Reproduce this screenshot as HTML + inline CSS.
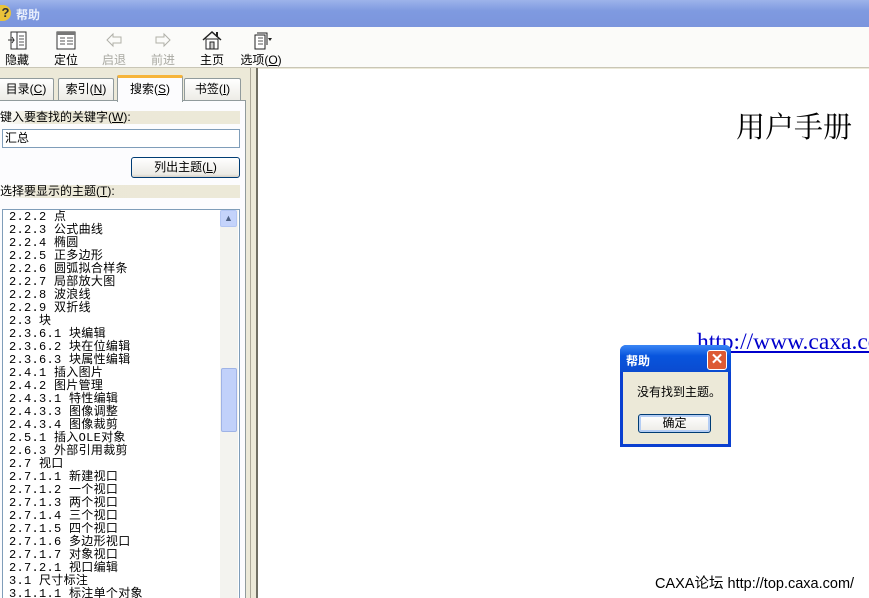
<!DOCTYPE html>
<html><head><meta charset="utf-8"><style>
*{margin:0;padding:0;box-sizing:border-box}
html,body{width:869px;height:598px;overflow:hidden}
body{background:#ece9d8;font-family:"Liberation Sans","Noto Sans CJK SC","WenQuanYi Zen Hei",sans-serif;font-size:12px;color:#000;position:relative}
.abs{position:absolute}
#title{left:0;top:0;width:869px;height:27px;background:linear-gradient(#9db3ea,#7f9ae0 40%,#7b95dd);color:#e8eefc;font-weight:bold;font-size:12px}
#tb{left:0;top:27px;width:869px;height:41px;background:#fbfbf9;border-bottom:1px solid #c9c6b6}
.tbi{position:absolute;top:3px;text-align:center;font-size:12px;width:44px}
.tbi svg{display:block;margin:0 auto 1px}
.dis{color:#a9a9a2}
.tab{position:absolute;top:78px;height:23px;border:1px solid #919b9c;border-bottom:none;background:linear-gradient(#fff,#ecebe5);text-align:center;line-height:21px;border-radius:2px 2px 0 0}
.lbl{position:absolute;left:0;width:240px;height:13px;background:linear-gradient(90deg,#fff,#ebe8d7 15%,#ece9d8);line-height:13px;font-size:12px}
#list{left:2px;top:209px;width:238px;height:389px;border:1px solid #7f9db9;border-bottom:none;background:#fff;overflow:hidden}
#list div{font-family:"Liberation Mono","Noto Sans CJK SC",monospace;font-size:12px;line-height:13px;height:13px;padding-left:6px;white-space:nowrap;letter-spacing:0.3px}
</style></head><body>
<div id="title" class="abs">
 <div class="abs" style="left:0;top:5px;width:11px;height:16px;background:#e8c23a;border-radius:0 8px 8px 0;color:#333;font-size:13px;line-height:16px;text-align:center">?</div>
 <div class="abs" style="left:16px;top:6px">帮助</div>
</div>
<div id="tb" class="abs">
 <div class="tbi" style="left:-5px"><svg width="22" height="20"><rect x="5" y="2" width="15" height="17" fill="#fff" stroke="#333"/><line x1="11" y1="2" x2="11" y2="19" stroke="#333"/><path d="M13 6h5M13 9h5M13 12h5M13 15h5" stroke="#555"/><path d="M2 10h6l-2-3M8 10l-2 3" stroke="#333" fill="none"/></svg>隐藏</div>
 <div class="tbi" style="left:44px"><svg width="22" height="20"><rect x="2" y="2" width="18" height="17" fill="#fff" stroke="#333"/><rect x="2" y="2" width="18" height="3" fill="#777"/><path d="M5 8h5M5 11h5M5 14h5M12 8h6M12 11h6M12 14h6" stroke="#555"/></svg>定位</div>
 <div class="tbi dis" style="left:92px"><svg width="22" height="20"><path d="M4 10l6-6v3h8v6h-8v3z" fill="none" stroke="#b0b0a8"/></svg>启退</div>
 <div class="tbi dis" style="left:141px"><svg width="22" height="20"><path d="M18 10l-6-6v3H4v6h8v3z" fill="none" stroke="#b0b0a8"/></svg>前进</div>
 <div class="tbi" style="left:190px"><svg width="22" height="20"><path d="M2 10L11 2l9 8" fill="none" stroke="#222" stroke-width="1.5"/><rect x="5" y="9" width="12" height="10" fill="#fff" stroke="#222"/><rect x="9" y="12" width="4" height="7" fill="#ccc" stroke="#222"/><rect x="15" y="2" width="2" height="5" fill="#222"/></svg>主页</div>
 <div class="tbi" style="left:238px;width:46px"><svg width="22" height="20"><rect x="5" y="5" width="10" height="14" fill="#fff" stroke="#222"/><path d="M7 3h10v12" fill="none" stroke="#222"/><path d="M8 8h5M8 11h5M8 14h5" stroke="#555"/><path d="M18 8h4l-2 3z" fill="#222"/></svg>选项(<u>O</u>)</div>
</div>
<div class="tab" style="left:-2px;width:56px">目录(<u>C</u>)</div>
<div class="tab" style="left:58px;width:56px">索引(<u>N</u>)</div>
<div class="tab" style="left:184px;width:57px">书签(<u>I</u>)</div>
<div class="tab" style="left:117px;top:75px;height:27px;width:66px;background:#fcfcfe;border-top:3px solid #f6b43a;line-height:22px;z-index:2">搜索(<u>S</u>)</div>
<div class="abs" style="left:0;top:100px;width:246px;height:498px;background:#fcfcfe;border-right:1px solid #919b9c;border-top:1px solid #919b9c"></div>
<div class="lbl" style="top:111px">键入要查找的关键字(<u>W</u>):</div>
<div class="abs" style="left:2px;top:129px;width:238px;height:19px;border:1px solid #7f9db9;background:#fff;padding-left:2px;line-height:17px">汇总</div>
<div class="abs" style="left:131px;top:157px;width:109px;height:21px;border:1px solid #003c74;border-radius:3px;background:linear-gradient(#fff,#ecebe6 85%,#d6d0c5);text-align:center;line-height:19px">列出主题(<u>L</u>)</div>
<div class="lbl" style="top:185px">选择要显示的主题(<u>T</u>):</div>
<div id="list" class="abs">
<div style="margin-top:1px">2.2.2 点</div><div>2.2.3 公式曲线</div><div>2.2.4 椭圆</div><div>2.2.5 正多边形</div><div>2.2.6 圆弧拟合样条</div><div>2.2.7 局部放大图</div><div>2.2.8 波浪线</div><div>2.2.9 双折线</div><div>2.3 块</div><div>2.3.6.1 块编辑</div><div>2.3.6.2 块在位编辑</div><div>2.3.6.3 块属性编辑</div><div>2.4.1 插入图片</div><div>2.4.2 图片管理</div><div>2.4.3.1 特性编辑</div><div>2.4.3.3 图像调整</div><div>2.4.3.4 图像裁剪</div><div>2.5.1 插入OLE对象</div><div>2.6.3 外部引用裁剪</div><div>2.7 视口</div><div>2.7.1.1 新建视口</div><div>2.7.1.2 一个视口</div><div>2.7.1.3 两个视口</div><div>2.7.1.4 三个视口</div><div>2.7.1.5 四个视口</div><div>2.7.1.6 多边形视口</div><div>2.7.1.7 对象视口</div><div>2.7.2.1 视口编辑</div><div>3.1 尺寸标注</div><div>3.1.1.1 标注单个对象</div>
</div>
<div class="abs" style="left:220px;top:210px;width:18px;height:388px;background:#f3f3ef"></div>
<div class="abs" style="left:220px;top:210px;width:17px;height:17px;background:#c4d3fb;border:1px solid #b3c6f4;border-radius:2px;color:#4d6185;font-size:9px;text-align:center;line-height:15px">▲</div>
<div class="abs" style="left:221px;top:368px;width:16px;height:64px;background:#c1d1fa;border:1px solid #9fb3e6;border-radius:2px"></div>
<div class="abs" style="left:250px;top:68px;width:1px;height:530px;background:#aca899"></div>
<div class="abs" style="left:256px;top:68px;width:2px;height:530px;background:#716f64"></div>
<div class="abs" style="left:258px;top:69px;width:611px;height:529px;background:#fff;overflow:hidden">
 <div class="abs" style="left:478px;top:36px;font-family:'Liberation Serif','Noto Serif CJK SC',serif;font-size:29px;white-space:nowrap">用户手册</div>
 <div class="abs" style="left:439px;top:260px;font-family:'Liberation Serif',serif;font-size:23.5px;color:#0000cc;text-decoration:underline;white-space:nowrap">http://www.caxa.com</div>
 <div class="abs" style="left:397px;top:503px;font-size:14.5px;white-space:nowrap">CAXA论坛 http://top.caxa.com/</div>
</div>
<div class="abs" style="left:620px;top:345px;width:111px;height:102px;background:#0a3fd0;border-radius:6px 6px 0 0"></div>
<div class="abs" style="left:620px;top:345px;width:111px;height:27px;background:linear-gradient(#3b87f5,#0855dd 40%,#0a4bd0);border-radius:6px 6px 0 0;color:#fff;font-weight:bold;padding:7px 0 0 6px">帮助</div>
<div class="abs" style="left:707px;top:350px;width:20px;height:20px;background:#dd5a33;border:1px solid #fff;border-radius:3px;color:#fff;font-size:15px;text-align:center;line-height:18px;font-weight:bold">✕</div>
<div class="abs" style="left:623px;top:372px;width:105px;height:72px;background:#ece9d8"></div>
<div class="abs" style="left:637px;top:383px;font-size:12px">没有找到主题。</div>
<div class="abs" style="left:638px;top:414px;width:73px;height:19px;border:1px solid #003c74;border-radius:3px;background:linear-gradient(#fff,#ecebe6);box-shadow:inset 0 0 0 2px #b4cdf4;text-align:center;line-height:17px">确定</div>
</body></html>
